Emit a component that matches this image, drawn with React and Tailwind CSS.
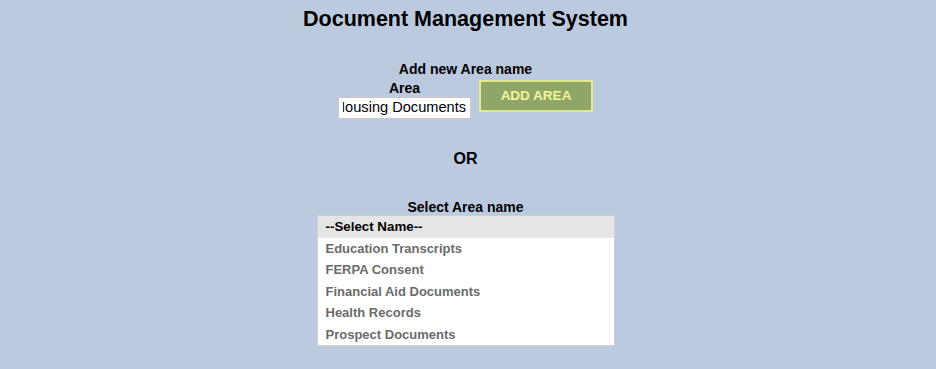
export default function App() {
  const areas = [
    "Education Transcripts",
    "FERPA Consent",
    "Financial Aid Documents",
    "Health Records",
    "Prospect Documents",
  ];

  return (
    <div className="min-h-[369px] bg-[#bccae0] font-['Liberation_Sans',Arial,sans-serif] text-black">
      <div className="flex flex-col items-center pr-[5px]">
        <h1 className="mt-[6px] h-[26px] text-[21.5px] leading-[26px] font-bold">
          Document Management System
        </h1>

        <p className="mt-[29px] text-[14px] leading-[16px] font-bold">Add new Area name</p>

        <div className="flex items-start gap-[8px]">
          <div className="flex flex-col items-center">
            <span className="mt-[3px] text-[14px] leading-[16px] font-bold">Area</span>
            <div className="mt-[1px] h-[22px] w-[133px] border border-[#c9c9c9] bg-white px-[4px]">
              <div className="flex h-full items-center justify-end overflow-hidden whitespace-nowrap text-[14.6px]">
                Housing Documents
              </div>
            </div>
          </div>
          <button className="mt-[3px] h-[32px] w-[114px] border-2 border-[#e3e98f] bg-[#8ea769] text-[13.5px] font-bold text-[#f3f59a]">
            ADD AREA
          </button>
        </div>

        <p className="mt-[31px] text-[16px] leading-[18px] font-bold">OR</p>

        <p className="mt-[31px] text-[14px] leading-[16px] font-bold">Select Area name</p>

        <div className="w-[298px] border border-[#cfcfcf] bg-white">
          <div className="flex h-[21.5px] items-center bg-[#e5e5e5] px-[8px] text-[13.33px] font-bold">
            --Select Name--
          </div>
          {areas.map((a) => (
            <div key={a} className="flex h-[21.5px] items-center px-[8px] text-[13px] font-bold text-[#6b6b6b]">
              {a}
            </div>
          ))}
        </div>
      </div>
    </div>
  );
}
